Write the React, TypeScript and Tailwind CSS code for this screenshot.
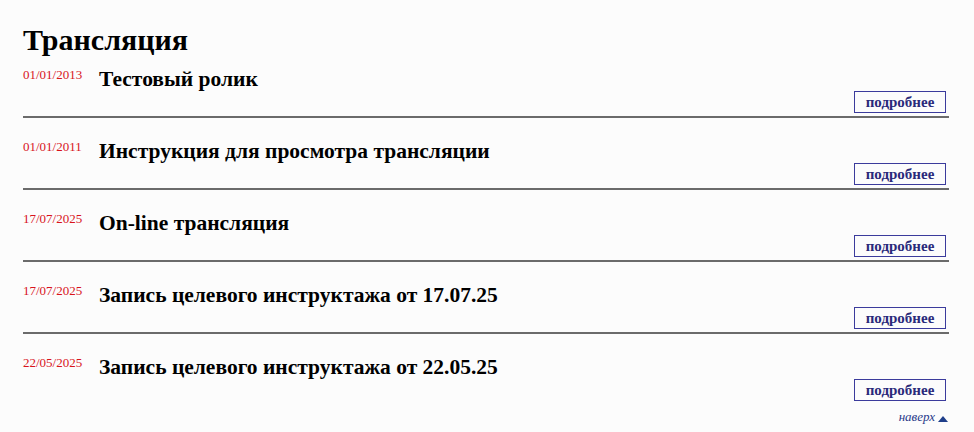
const items = [
  { date: '01/01/2013', title: 'Тестовый ролик' },
  { date: '01/01/2011', title: 'Инструкция для просмотра трансляции' },
  { date: '17/07/2025', title: 'On-line трансляция' },
  { date: '17/07/2025', title: 'Запись целевого инструктажа от 17.07.25' },
  { date: '22/05/2025', title: 'Запись целевого инструктажа от 22.05.25' },
]

export default function App() {
  return (
    <div className="min-h-[432px] bg-[#fcfcfc] font-['Liberation_Serif',serif] text-black">
      <div className="pl-[23px] pr-[25px] pt-[23px]">
        <h1 className="text-[30px] font-bold leading-[33px]">Трансляция</h1>

        {items.map((item, i) => (
          <div key={i} className={i < items.length - 1 ? 'border-b-2 border-[#6b6b6b]' : ''}>
            <div className={`flex h-[22px] items-start box-content ${i === 0 ? 'pt-[10px]' : 'pt-[20px]'}`}>
              <span className="w-[76px] shrink-0 text-[13px] leading-[16px] pt-[1px] text-[#d8141c]">{item.date}</span>
              <span className="text-[21.5px] font-bold leading-[22px] pt-[2px]">{item.title}</span>
            </div>
            <div className="flex justify-end pr-[3px] pt-[3px] pb-[3px]">
              <a
                href="#"
                className="flex h-[22px] w-[92px] items-center justify-center border border-[#3b3b9c] text-[15px] font-bold text-[#2a2a7a]"
              >
                подробнее
              </a>
            </div>
          </div>
        ))}

        <div className="flex justify-end pt-[6px] pr-[1px]">
          <a href="#" className="flex items-center gap-[3px] text-[13px] italic leading-[14px] text-[#2a3b8a]">
            наверх
            <svg width="10" height="6" viewBox="0 0 10 6" aria-hidden="true" className="mt-[4px]">
              <path d="M0 6L5 0L10 6Z" fill="#1f3f8a" />
            </svg>
          </a>
        </div>
      </div>
    </div>
  )
}
